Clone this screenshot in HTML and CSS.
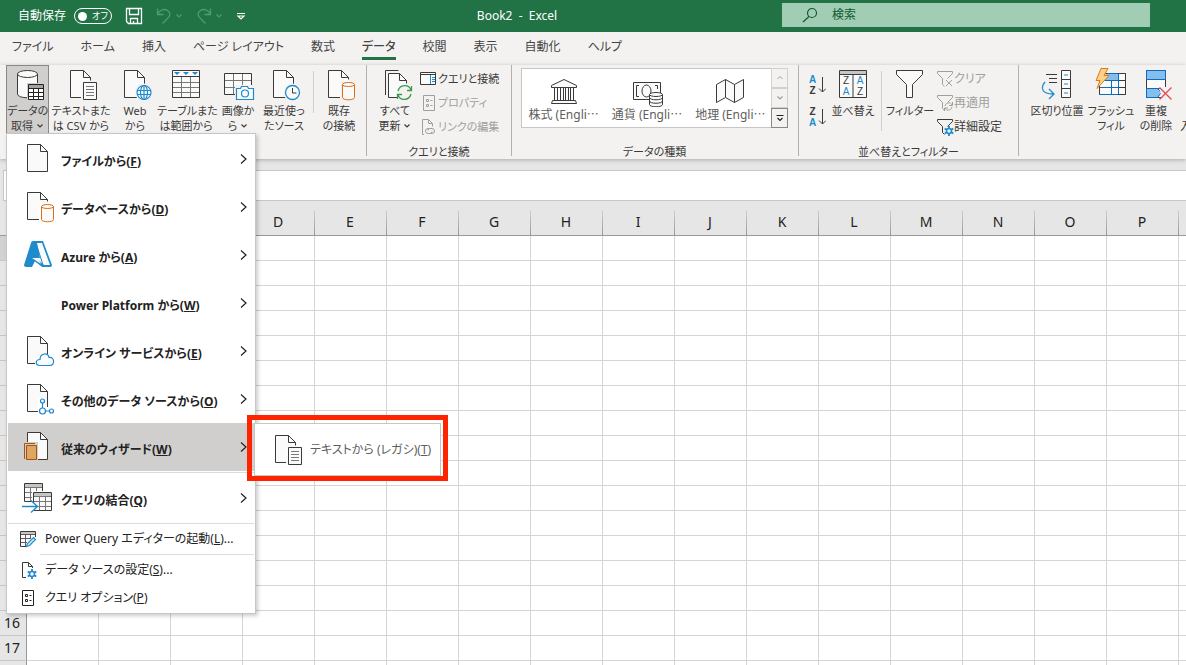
FILE: index.html
```html
<!DOCTYPE html>
<html lang="ja">

<head>
    <meta charset="UTF-8">
    <meta name="viewport" content="width=device-width, initial-scale=1.0">
    <title>Book2 - Excel</title>
    <link rel="stylesheet" href="styles.css">
</head>

<body>

    <!-- shared icon shapes -->
    <svg class="defs" width="0" height="0">
        <symbol id="doc" viewBox="0 0 32 32">
            <path d="M5.5 1.5h13l7 7v20h-20z" fill="#fafafa" stroke="#3b3a39" />
            <path d="M18.5 1.5v7h7" fill="none" stroke="#3b3a39" />
        </symbol>
        <symbol id="doc-text" viewBox="0 0 32 32">
            <path d="M5.5 1.5h12l7 7v4h-7v16h-12z" fill="#fafafa" />
            <path d="M16 28.5H5.5v-27h13l7 7v3M18.5 1.5v7h7" fill="none" stroke="#3b3a39" />
            <path d="M18.5 13.5h13v17h-13z" fill="#fafafa" stroke="#3b3a39" />
            <path d="M21 17.5h8M21 20.5h8M21 23.5h8M21 26.5h8" stroke="#797774" />
        </symbol>
        <symbol id="doc-db" viewBox="0 0 32 32">
            <path d="M5.5 1.5h13l7 7v4h-8v16h-12z" fill="#fafafa" />
            <path d="M17 28.5H5.5v-27h13l7 7v2M18.5 1.5v7h7" fill="none" stroke="#3b3a39" />
            <path d="M19.5 15.5v13c0 3 12 3 12 0v-13" fill="#fafafa" stroke="#dd6b10" />
            <ellipse cx="25.5" cy="15.5" rx="6" ry="2" fill="#fafafa" stroke="#dd6b10" />
        </symbol>
        <symbol id="down" viewBox="0 0 8 8">
            <path d="M1.5 2.5l2.5 2.5 2.5-2.5" fill="none" stroke="currentColor" stroke-width="1.2" />
        </symbol>
        <symbol id="right" viewBox="0 0 8 12">
            <path d="M1 1.5l5 4.5-5 4.5" fill="none" stroke="currentColor" stroke-width="1.2" />
        </symbol>
        <symbol id="funnel" viewBox="0 0 18 18">
            <path d="M1.5 1.5h15v2l-5 5M1.5 1.5v2l5 5v6l2 2" fill="none" stroke="currentColor" />
        </symbol>
        <symbol id="gear" viewBox="0 0 10 10">
            <circle cx="5" cy="5" r="2.5" fill="none" stroke="#1e8bcd" stroke-width="1.5" />
            <path d="M5 0v2.500M5 7.500v2.500M.7 2.500l2 1.200M7.300 6.300l2 1.200M.7 7.500l2-1.200M7.300 3.700l2-1.200" stroke="#1e8bcd" stroke-width="1.8" />
        </symbol>
        <symbol id="props" viewBox="0 0 18 18">
            <path d="M3.5 1.5h11v15h-11z" fill="none" stroke="currentColor" />
            <path d="M6.5 5.5h2v2h-2zM6.5 10.5h2v2h-2z" fill="none" stroke="currentColor" />
            <path d="M10.5 6.5h2M10.5 11.5h2" stroke="currentColor" />
        </symbol>
    </svg>

    <header class="titlebar">
        <div class="quick">
            <label class="autosave">自動保存
                <span class="switch"><input type="checkbox"><span>オフ</span></span>
            </label>
            <button aria-label="保存">
                <svg width="18" height="18" viewBox="0 0 18 18" fill="none" stroke="#fff" stroke-width="1.3">
                    <path d="M1.5 1.5h15v15h-13l-2-2zM4.5 1.5v6h9v-6M5.5 16.5v-5h7v5M8.5 16v-2" />
                </svg>
            </button>
            <button class="dim" aria-label="元に戻す">
                <svg width="16" height="18" viewBox="0 0 16 18" fill="none" stroke="currentColor" stroke-width="1.3">
                    <path d="M1.5 1.5v6h6M1.5 7.5c2-5 7-6 10-4 3 2 3 5 1 7l-6 6" />
                </svg>
                <svg width="8" height="8"><use href="#down" /></svg>
            </button>
            <button class="dim" aria-label="やり直し">
                <svg width="16" height="18" viewBox="0 0 16 18" fill="none" stroke="currentColor" stroke-width="1.3">
                    <path d="M14.5 1.5v6h-6M14.5 7.5c-2-5-7-6-10-4-3 2-3 5-1 7l6 6" />
                </svg>
                <svg width="8" height="8"><use href="#down" /></svg>
            </button>
            <button aria-label="カスタマイズ">
                <svg width="10" height="10" viewBox="0 0 10 10" fill="none" stroke="#fff" stroke-width="1.2">
                    <path d="M1 2.5h8M2 5l3 3 3-3z" />
                </svg>
            </button>
        </div>
        <h1>Book2 &nbsp;- &nbsp;Excel</h1>
        <label class="search">
            <svg width="16" height="16" viewBox="0 0 16 16" fill="none" stroke="#0e5c2f" stroke-width="1.2">
                <circle cx="10" cy="6" r="4.500" />
                <path d="M7 9.500l-6 5.500" />
            </svg>
            <input type="text" placeholder="検索" aria-label="検索">
        </label>
    </header>

    <nav class="tabs">
        <a href="#">ファイル</a>
        <a href="#">ホーム</a>
        <a href="#">挿入</a>
        <a href="#">ページ レイアウト</a>
        <a href="#">数式</a>
        <a href="#" class="active">データ</a>
        <a href="#">校閲</a>
        <a href="#">表示</a>
        <a href="#">自動化</a>
        <a href="#">ヘルプ</a>
    </nav>

    <div class="ribbon">
        <section class="group get-data">
            <div class="tools">
                <button class="tool pressed">
                    <svg class="icon" viewBox="0 0 32 32">
                        <path d="M5.5 5v20c0 5 20 5 20 0V5" fill="#fafafa" stroke="#3b3a39" />
                        <ellipse cx="15.5" cy="5" rx="10" ry="3.5" fill="#fafafa" stroke="#3b3a39" />
                        <path d="M15 14h17v18H15z" fill="#d0cfce" />
                        <path d="M16.5 15.5h15v15h-15z" fill="#fff" stroke="#222" />
                        <path d="M17 16h14v3H17z" fill="#a5a3a1" />
                        <path d="M16.5 19.5h15M16.5 23.5h15M16.5 27.5h15M21.5 19v12M26.5 19v12" stroke="#222" />
                    </svg>
                    データの<br>取得 <svg width="8" height="8"><use href="#down" /></svg>
                </button>
                <button class="tool">
                    <svg class="icon"><use href="#doc-text" /></svg>
                    テキストまた<br>は CSV から
                </button>
                <button class="tool">
                    <svg class="icon" viewBox="0 0 32 32">
                        <use href="#doc" />
                        <circle cx="25" cy="23.5" r="9" fill="#f3f2f1" />
                        <g fill="none" stroke="#1e8bcd" stroke-width="1.2">
                            <circle cx="25" cy="23.5" r="7" fill="#fafafa" />
                            <ellipse cx="25" cy="23.5" rx="3.5" ry="7" />
                            <path d="M18.5 21.5h13M18.5 25.5h13M25 16.5v14" />
                        </g>
                    </svg>
                    Web<br>から
                </button>
                <button class="tool">
                    <svg class="icon" viewBox="0 0 32 32">
                        <path d="M2.5 1.5h27v27h-27z" fill="#fafafa" stroke="#3b3a39" />
                        <path d="M3 13.5h26M3 18.5h26M3 23.5h26M11.5 7v21M20.5 7v21" stroke="#797774" />
                        <path d="M2.5 7.5h27" stroke="#3b3a39" />
                        <path d="M4 3h6l-3 3zM13 3h6l-3 3zM22 3h6l-3 3z" fill="#1e8bcd" />
                    </svg>
                    テーブルまた<br>は範囲から
                </button>
                <button class="tool">
                    <svg class="icon" viewBox="0 0 32 32">
                        <path d="M2.5 4.5h27v21h-27z" fill="#fafafa" stroke="#3b3a39" />
                        <path d="M3 11.5h26M3 18.5h26M11.5 5v20M20.5 5v20" stroke="#797774" />
                        <path d="M13 16h19v16H13z" fill="#f3f2f1" />
                        <path d="M14.5 19.5h4l1-2h6l1 2h5v11h-17z" fill="#fafafa" stroke="#1e8bcd" stroke-width="1.2" />
                        <circle cx="23" cy="24.5" r="3.5" fill="none" stroke="#1e8bcd" stroke-width="1.2" />
                    </svg>
                    画像か<br>ら <svg width="8" height="8"><use href="#down" /></svg>
                </button>
                <button class="tool">
                    <svg class="icon" viewBox="0 0 32 32">
                        <use href="#doc" />
                        <circle cx="24.5" cy="23.5" r="9" fill="#f3f2f1" />
                        <circle cx="24.5" cy="23.5" r="7" fill="#fafafa" stroke="#1e8bcd" stroke-width="1.3" />
                        <path d="M24.5 19v5h4" fill="none" stroke="#3b3a39" />
                    </svg>
                    最近使っ<br>たソース
                </button>
                <i class="divider short"></i>
                <button class="tool">
                    <svg class="icon"><use href="#doc-db" /></svg>
                    既存<br>の接続
                </button>
            </div>
        </section>

        <section class="group connections">
            <div class="tools">
                <button class="tool">
                    <svg class="icon" viewBox="0 0 32 32">
                        <path d="M6.5 26V1.5h13" fill="none" stroke="#3b3a39" />
                        <path d="M9.5 4.5h11l7 7v17h-18z" fill="#fafafa" />
                        <path d="M18 28.5H9.5v-24h11l7 7v3M20.5 4.5v7h7" fill="none" stroke="#3b3a39" />
                        <circle cx="26" cy="23.5" r="8.5" fill="#f3f2f1" />
                        <path d="M19 22c2-7 11-7 13-1M32.5 17v4.5H28M32 25c-2 7-11 7-13 1M18.5 30v-4.5H23" fill="none" stroke="#3a9b4e" stroke-width="1.3" />
                    </svg>
                    すべて<br>更新 <svg width="8" height="8"><use href="#down" /></svg>
                </button>
                <div class="stack">
                    <button class="line">
                        <svg viewBox="0 0 18 18">
                            <path d="M.5 2.5h15v12H.5z" fill="#fafafa" stroke="#3b3a39" />
                            <path d="M1 4.5h14" stroke="#3b3a39" />
                            <path d="M10.5 5v9M12 7.5h3M12 9.5h3M12 11.5h3" stroke="#1e8bcd" />
                        </svg>
                        クエリと接続
                    </button>
                    <button class="line" disabled>
                        <svg><use href="#props" /></svg>
                        プロパティ
                    </button>
                    <button class="line" disabled>
                        <svg viewBox="0 0 18 18" fill="none" stroke="currentColor">
                            <path d="M4 16.5H2.5v-15h6l4 4v3M8.5 1.5v4h4" />
                            <path d="M9 10.5h-1a2 2 0 0 0 0 5h2a2 2 0 0 0 2-2M11 15.5h1a2 2 0 0 0 0-5h-2a2 2 0 0 0-2 2" />
                        </svg>
                        リンクの編集
                    </button>
                </div>
            </div>
            <h2>クエリと接続</h2>
        </section>

        <section class="group types">
            <div class="gallery">
                <button>
                    <svg viewBox="0 0 32 28" fill="#fafafa" stroke="#3b3a39">
                        <path d="M3.5 8.5v-2l12.5-6 12.5 6v2z" />
                        <path d="M6.5 8.5h3v13h-3zM12.5 8.5h3v13h-3zM17.5 8.5h3v13h-3zM22.5 8.5h3v13h-3z" />
                        <path d="M4.5 21.5h23l1 3h-25z" />
                    </svg>
                    株式 (Engli⋯
                </button>
                <button>
                    <svg viewBox="0 0 32 28" fill="#fafafa" stroke="#3b3a39">
                        <path d="M2.5 3.5h27v17h-27z" />
                        <path d="M8 6.5H5.5v11H8M24 6.5h2.5V10" fill="none" />
                        <ellipse cx="15.5" cy="12" rx="4.5" ry="6" />
                        <path d="M18.5 15.5v10c0 3 13 3 13 0v-10" />
                        <ellipse cx="25" cy="15.5" rx="6.5" ry="2" />
                        <path d="M18.5 18.500c0 3 13 3 13 0M18.5 22c0 3 13 3 13 0" fill="none" />
                    </svg>
                    通貨 (Engli⋯
                </button>
                <button>
                    <svg viewBox="0 0 32 28" fill="#fafafa" stroke="#3b3a39">
                        <path d="M2.5 5.5l9-5 9 5 9-5v18l-9 5-9-5-9 5z" />
                        <path d="M11.5 .5v18M20.5 5.5v18" />
                    </svg>
                    地理 (Engli⋯
                </button>
                <div class="scroller">
                    <button disabled aria-label="上へ"><svg width="8" height="8" viewBox="0 0 8 8"><path d="M1.5 5l2.5-2.5 2.5 2.5" fill="none" stroke="currentColor" /></svg></button>
                    <button disabled aria-label="下へ"><svg width="8" height="8"><use href="#down" /></svg></button>
                    <button aria-label="その他"><svg width="8" height="8" viewBox="0 0 8 8"><path d="M.5 1.5h7M1.5 4l2.5 2.5 2.5-2.5" fill="none" stroke="#222" stroke-width="1.2" /></svg></button>
                </div>
            </div>
            <h2>データの種類</h2>
        </section>

        <section class="group sort">
            <div class="tools">
                <div class="order">
                    <button aria-label="昇順">
                        <span><b>A</b>Z</span>
                        <svg width="8" height="18" viewBox="0 0 8 18" fill="none" stroke="#3b3a39"><path d="M4.5 1v15M1 12.5l3.5 3.5 3.5-3.5" /></svg>
                    </button>
                    <button aria-label="降順">
                        <span>Z<b>A</b></span>
                        <svg width="8" height="18" viewBox="0 0 8 18" fill="none" stroke="#3b3a39"><path d="M4.5 1v15M1 12.5l3.5 3.5 3.5-3.5" /></svg>
                    </button>
                </div>
                <button class="tool">
                    <svg class="icon letters" viewBox="0 0 32 32">
                        <path d="M2.5 1.5h27v27h-27z" fill="#fafafa" stroke="#3b3a39" />
                        <path d="M3 2h26v3H3z" fill="#c8c6c4" />
                        <path d="M2.5 5.5h27M16 6v22" stroke="#3b3a39" />
                        <text x="9" y="15">Z</text>
                        <text x="9" y="26" class="blue">A</text>
                        <text x="23" y="15" class="blue">A</text>
                        <text x="23" y="26">Z</text>
                    </svg>
                    並べ替え
                </button>
                <i class="divider"></i>
                <button class="tool">
                    <svg class="icon" viewBox="0 0 32 32">
                        <path d="M2.5 1.5h26v4l-10 10v13h-6v-13l-10-10z" fill="#fafafa" stroke="#3b3a39" />
                    </svg>
                    フィルター
                </button>
                <div class="stack">
                    <button class="line" disabled>
                        <svg viewBox="0 0 18 18">
                            <use href="#funnel" />
                            <path d="M10 10l6 6M16 10l-6 6" stroke="currentColor" />
                        </svg>
                        クリア
                    </button>
                    <button class="line" disabled>
                        <svg viewBox="0 0 18 18">
                            <use href="#funnel" />
                            <path d="M9 12c1-4 6-4 7-1M16.5 8v3.5H13M16 13c-1 4-6 4-7 1M8.5 17v-3H12" fill="none" stroke="currentColor" />
                        </svg>
                        再適用
                    </button>
                    <button class="line">
                        <svg viewBox="0 0 18 18">
                            <use href="#funnel" />
                            <use href="#gear" x="8" y="8" width="10" height="10" />
                        </svg>
                        詳細設定
                    </button>
                </div>
            </div>
            <h2>並べ替えとフィルター</h2>
        </section>

        <section class="group data-tools">
            <div class="tools">
                <button class="tool">
                    <svg class="icon" viewBox="0 0 32 32">
                        <path d="M5 5.5h11M8 9.5h8M8 13.5h8" stroke="#3b3a39" />
                        <path d="M20.5 1.5h9v27h-9zM20.5 10.5h9M20.5 19.5h9" fill="#fafafa" stroke="#3b3a39" />
                        <path d="M23 6h4M23 15h4M23 24h4" stroke="#1e8bcd" />
                        <path d="M4 13c-5 6-3 12 8 12M8 20l5 5-5 5" fill="none" stroke="#1e8bcd" stroke-width="1.3" />
                    </svg>
                    区切り位置
                </button>
                <button class="tool">
                    <svg class="icon" viewBox="0 0 32 32">
                        <path d="M4.5 4.5h26v21h-26z" fill="#fafafa" stroke="#3b3a39" />
                        <path d="M11 5h13v6H9z" fill="#83beec" />
                        <path d="M5 25.5h18.5v-21H12M5 18.5h25M8 11.5h22M16.5 11v14" fill="none" stroke="#0f6cbd" />
                        <path d="M23.5 25.5h7v-21h-7M24 11.5h6M24 18.5h6" fill="none" stroke="#3b3a39" />
                        <path d="M6-.5h7l-4 7h5L2 19.5l3-8H1z" fill="#f9d28b" stroke="#e3790d" />
                    </svg>
                    フラッシュ<br>フィル
                </button>
                <button class="tool">
                    <svg class="icon" viewBox="0 0 32 32">
                        <path d="M6.5 1.5h19v27h-19z" fill="#fafafa" stroke="#3b3a39" />
                        <path d="M6.5 1.5h19v9h-19zM6.5 19.5h11l4 4-4 5h-11z" fill="#83beec" stroke="#0f6cbd" />
                        <path d="M19 18h13v12H22z" fill="#f3f2f1" />
                        <path d="M6.5 19.5h14" stroke="#0f6cbd" />
                        <path d="M19.5 18.5l12 12M31.5 18.5l-12 12" stroke="#e8484f" stroke-width="1.3" />
                    </svg>
                    重複<br>の削除
                </button>
                <button class="tool">
                    <svg class="icon"></svg>
                    <br>入力規則
                </button>
            </div>
        </section>
    </div>

    <div class="formula-bar">
        <input type="text" aria-label="数式バー">
    </div>

    <main class="sheet">
        <table>
            <thead>
                <tr>
                    <th class="corner"></th>
                    <th></th><th></th><th></th><th>D</th><th>E</th><th>F</th><th>G</th><th>H</th><th>I</th>
                    <th>J</th><th>K</th><th>L</th><th>M</th><th>N</th><th>O</th><th>P</th><th></th>
                </tr>
            </thead>
            <tbody id="rows"></tbody>
        </table>
    </main>

    <div class="menu">
        <button class="item">
            <svg class="icon"><use href="#doc" /></svg>
            <span>ファイルから(<u>F</u>)</span>
            <svg class="arrow"><use href="#right" /></svg>
        </button>
        <button class="item">
            <svg class="icon"><use href="#doc-db" /></svg>
            <span>データベースから(<u>D</u>)</span>
            <svg class="arrow"><use href="#right" /></svg>
        </button>
        <button class="item">
            <svg class="icon" viewBox="0 0 32 32">
                <path d="M11 2h10l9 24c0 1-1 2-2 2h-8l-7-6-3 6H4c-1 0-2-1-2-2L9 4c0-1 1-2 2-2z" fill="#1e8bcd" />
                <path d="M15 4h5l8 22h-6L13 19h5z" fill="#fafafa" />
                <path d="M15 3l-4 16h4l6 7h-3l-7-5-2 6" fill="#1e8bcd" />
                <path d="M14 4l7 22" fill="none" stroke="#1e8bcd" />
                <path d="M10 19h6l3 6z" fill="#fafafa" />
            </svg>
            <span>Azure から(<u>A</u>)</span>
            <svg class="arrow"><use href="#right" /></svg>
        </button>
        <button class="item">
            <svg class="icon"></svg>
            <span>Power Platform から(<u>W</u>)</span>
            <svg class="arrow"><use href="#right" /></svg>
        </button>
        <button class="item">
            <svg class="icon" viewBox="0 0 32 32">
                <use href="#doc" />
                <path d="M13 32V24l6-5h13v13z" fill="#fff" />
                <path d="M18 30.5c-5 0-5-6 0-6 0-7 9-7 9-2 6-1 6 8 1 8z" fill="#fafafa" stroke="#1e8bcd" stroke-width="1.2" />
            </svg>
            <span>オンライン サービスから(<u>E</u>)</span>
            <svg class="arrow"><use href="#right" /></svg>
        </button>
        <button class="item">
            <svg class="icon" viewBox="0 0 32 32">
                <use href="#doc" />
                <path d="M16 32V15h8v9h8v8z" fill="#fff" />
                <g fill="#fafafa" stroke="#1e8bcd" stroke-width="1.2">
                    <path d="M20.5 20v5M23 28h5" />
                    <circle cx="20.5" cy="18" r="2" />
                    <circle cx="20.5" cy="28" r="3" />
                    <circle cx="29.5" cy="28" r="2" />
                </g>
            </svg>
            <span>その他のデータ ソースから(<u>O</u>)</span>
            <svg class="arrow"><use href="#right" /></svg>
        </button>
        <button class="item selected">
            <svg class="icon" viewBox="0 0 32 32">
                <use href="#doc" />
                <path d="M1 11h15v19H1z" fill="#d0cfce" />
                <path d="M2.5 28V12.5H13" fill="none" stroke="#a8500f" />
                <path d="M4.5 14.5h10v14h-10z" fill="#dda762" stroke="#a8500f" />
            </svg>
            <span>従来のウィザード(<u>W</u>)</span>
            <svg class="arrow"><use href="#right" /></svg>
        </button>
        <hr class="indent">
        <button class="item">
            <svg class="icon" viewBox="0 0 32 32">
                <path d="M2.5 1.5h18v18h-18z" fill="#fafafa" stroke="#3b3a39" />
                <path d="M3 2h17v3H3z" fill="#c8c6c4" />
                <path d="M3 5.5h17M3 10.5h17M3 15.5h17M8.5 5v14M14.5 5v14" stroke="#797774" />
                <path d="M10 9h22v21H17L10 23z" fill="#fff" />
                <path d="M11.5 10.5h18v18h-18z" fill="#fafafa" stroke="#3b3a39" />
                <path d="M12 11h17v3H12z" fill="#c8c6c4" />
                <path d="M12 14.5h17M12 19.5h17M12 24.5h17M17.5 14v14M23.5 14v14" stroke="#797774" />
                <path d="M1 20h9l6 4-6 6-9-3z" fill="#fff" />
                <path d="M0 24.5h15M9 18.5l6.500 6-6.500 6" fill="none" stroke="#1e8bcd" stroke-width="1.3" />
            </svg>
            <span>クエリの結合(<u>Q</u>)</span>
            <svg class="arrow"><use href="#right" /></svg>
        </button>
        <hr>
        <button class="small">
            <svg viewBox="0 0 18 18">
                <path d="M7 16.500H1.500v-15h15V7" fill="#fafafa" stroke="#3b3a39" />
                <path d="M2 2h14v2H2z" fill="#c8c6c4" />
                <path d="M2 4.500h14M2 8.500h10M2 12.500h6M6.500 4v12M11.500 4v5" stroke="#605e5c" />
                <path d="M7.500 16.500l1-3 6-6 2 2-6 6z" fill="#d3e9f8" stroke="#1e8bcd" stroke-width="1.2" />
            </svg>
            <span>Power Query エディターの起動(<u>L</u>)...</span>
        </button>
        <hr class="indent">
        <button class="small">
            <svg viewBox="0 0 18 18">
                <path d="M7 16.500H3.500v-15h6l4 4V7M9.500 1.500v4h4" fill="none" stroke="#3b3a39" />
                <use href="#gear" x="8" y="8" width="10" height="10" />
            </svg>
            <span>データ ソースの設定(<u>S</u>)...</span>
        </button>
        <button class="small">
            <svg><use href="#props" /></svg>
            <span>クエリ オプション(<u>P</u>)</span>
        </button>
    </div>

    <div class="highlight">
        <button class="submenu">
            <svg class="icon"><use href="#doc-text" /></svg>
            <span>テキストから (レガシ)(<u>T</u>)</span>
        </button>
    </div>

    <script>
        const rows = document.getElementById('rows');

        // the menu hides the first row numbers
        for (let i = 1; i <= 40; i++) {
            const label = i === 16 || i === 17 ? i : '';
            rows.innerHTML += `<tr><th>${label}</th>${'<td></td>'.repeat(17)}</tr>`;
        }
    </script>
</body>

</html>
```
FILE: styles.css
```css
* {
    margin: 0;
    padding: 0;
    box-sizing: border-box;
}

body {
    position: relative;
    height: 100vh;
    overflow: hidden;
    display: flex;
    flex-direction: column;
    background-color: #e6e6e6;
    color: #3b3a39;
    font-family: "Noto Sans", "Noto Sans CJK JP", sans-serif;
    font-size: 12px;
    line-height: 16px;
    font-feature-settings: "palt";
}

button,
input {
    border: none;
    background: none;
    color: inherit;
    font: inherit;
    font-feature-settings: inherit;
}

button {
    white-space: nowrap;
}

.defs {
    position: absolute;
}

.icon {
    display: block;
    width: 32px;
    height: 32px;
    flex-shrink: 0;
    overflow: visible;
}

/* title bar */
.titlebar {
    display: grid;
    grid-template-columns: 252px 1fr 368px 36px;
    align-items: center;
    flex-shrink: 0;
    height: 32px;
    background-color: #217346;
    color: white;
}

.titlebar h1 {
    font-size: 12px;
    font-weight: normal;
    text-align: center;
}

.quick {
    display: flex;
    align-items: center;
    padding-left: 18px;
    gap: 13px;
}

.quick button {
    display: flex;
    align-items: center;
    gap: 3px;
}

.quick .dim {
    color: #4f9a70;
}

.autosave {
    display: flex;
    align-items: center;
    gap: 8px;
    white-space: nowrap;
}

.switch {
    display: flex;
    align-items: center;
    gap: 5px;
    width: 38px;
    height: 16px;
    padding: 0 3px;
    border: 1px solid white;
    border-radius: 8px;
    font-size: 9px;
}

.switch input {
    appearance: none;
    flex-shrink: 0;
    width: 9px;
    height: 9px;
    border-radius: 50%;
    background-color: white;
}

.search {
    display: flex;
    align-items: center;
    gap: 14px;
    height: 24px;
    margin-bottom: 2px;
    padding-left: 20px;
    background-color: #a0cdb4;
    color: #0e5c2f;
}

.search input {
    flex: 1;
}

.search input::placeholder {
    color: #0e5c2f;
}

/* tabs */
.tabs {
    display: flex;
    gap: 27px;
    flex-shrink: 0;
    height: 33px;
    padding: 5px 12px 0;
    background-color: #f3f2f1;
    line-height: 20px;
    white-space: nowrap;
}

.tabs a {
    height: 23px;
    color: #444;
    text-decoration: none;
}

.tabs .active {
    border-bottom: 3px solid #217346;
    font-weight: 500;
}

/* ribbon */
.ribbon {
    display: flex;
    flex-shrink: 0;
    height: 94px;
    padding-bottom: 3px;
    background-color: #f3f2f1;
    box-shadow: 0 1px 4px #aaa;
    font-size: 11px;
}

.group {
    display: flex;
    flex-direction: column;
    justify-content: space-between;
    flex-shrink: 0;
    border-right: 1px solid #b3b0ad;
}

.group h2 {
    margin-bottom: -3px;
    font-size: 11px;
    font-weight: normal;
    line-height: 14px;
    text-align: center;
}

.tools {
    display: flex;
    align-items: start;
}

.tool {
    padding-top: 4px;
    line-height: 15px;
    text-align: center;
}

.tool .icon {
    margin: 0 auto 2px;
}

.pressed {
    height: 69px;
    padding-top: 3px;
    border: 1px solid #8a8886;
    background-color: #d0cfce;
}

.divider {
    justify-self: center;
    width: 1px;
    height: 60px;
    margin-top: 6px;
    background-color: #d2d0ce;
}

.divider.short {
    height: 42px;
}

.get-data {
    width: 367px;
    padding-left: 6px;
}

.get-data .tools {
    display: grid;
    grid-template-columns: 43px 64px 44px 58px 46px 46px 12px 40px;
}

.connections {
    width: 145px;
}

.connections .tool {
    width: 53px;
    padding-left: 3px;
}

.stack {
    display: flex;
    flex-direction: column;
    padding-top: 2px;
}

.line {
    display: flex;
    align-items: center;
    height: 24px;
}

.line svg {
    width: 18px;
    height: 18px;
}

.line:disabled {
    color: #a19f9d;
}

.types {
    width: 287px;
    padding: 3px 10px 0 9px;
}

.gallery {
    display: grid;
    grid-template-columns: 1fr 1fr 1fr 15px;
    height: 60px;
    border: 1px solid #c8c6c4;
    background-color: white;
    font-size: 12px;
}

.gallery > button {
    color: #605e5c;
    padding-top: 4px;
}

.gallery > button svg {
    display: block;
    width: 32px;
    height: 28px;
    margin: 2px auto 0;
}

.scroller {
    display: grid;
    grid-template-rows: 1fr 1fr 1fr;
    margin: -1px;
}

.scroller button {
    display: flex;
    align-items: center;
    justify-content: center;
    border: 1px solid #8a8886;
    background-color: #f3f2f1;
}

.scroller button:disabled {
    border-color: #d2d0ce;
    color: #a19f9d;
}

.sort {
    width: 220px;
}

.sort .tools {
    display: grid;
    grid-template-columns: 30px 48px 8px 50px 1fr;
}

.sort .line {
    font-size: 12px;
}

.order {
    display: flex;
    flex-direction: column;
    gap: 10px;
    padding: 9px 0 0 10px;
}

.order button {
    display: flex;
    align-items: center;
    gap: 2px;
    height: 22px;
    font-family: "Liberation Sans", sans-serif;
    font-size: 10px;
    font-weight: bold;
    line-height: 11px;
}

.order button span {
    display: flex;
    flex-direction: column;
}

.order b {
    color: #1e8bcd;
}

.letters text {
    fill: #3b3a39;
    font-family: "Liberation Sans", sans-serif;
    font-size: 10px;
    text-anchor: middle;
}

.letters .blue {
    fill: #1e8bcd;
}

.sort .stack {
    padding-left: 1px;
}

.data-tools {
    border: none;
}

.data-tools .tools {
    display: grid;
    grid-template-columns: 60px 48px 42px 50px;
    padding-left: 8px;
}

/* formula bar */
.formula-bar {
    display: flex;
    flex-shrink: 0;
    height: 42px;
    padding: 11px 0 0 3px;
}

.formula-bar input {
    flex: 1;
    border: 1px solid #c6c6c6;
    border-right: none;
    background-color: white;
}

/* cells */
.sheet {
    flex: 1;
    overflow: hidden;
}

table {
    table-layout: fixed;
    width: 1251px;
    border-collapse: separate;
    border-spacing: 0;
    font-size: 14px;
    color: #222;
}

th {
    width: 72px;
    padding-right: 2px;
    font-weight: normal;
}

thead th {
    height: 35px;
    padding-top: 8px;
    border-bottom: 1px solid #999;
    background: linear-gradient(#d0d0d0, #999) right bottom / 1px 25px no-repeat #e6e6e6;
}

tbody th,
.corner {
    width: 27px;
}

tbody th {
    border-right: 1px solid #999;
    border-bottom: 1px solid #c6c6c6;
    background-color: #e6e6e6;
}

tbody tr:first-child th {
    background-color: #d2d2d2;
}

td {
    height: 25px;
    border-right: 1px solid #d4d4d4;
    border-bottom: 1px solid #d4d4d4;
    background-color: white;
}

/* drop-down menu */
.menu {
    position: absolute;
    top: 133px;
    left: 6px;
    width: 250px;
    padding: 1px;
    border: 1px solid #c6c6c6;
    background-color: white;
    color: #222;
    box-shadow: 2px 2px 4px #0003;
}

.item,
.small {
    display: flex;
    align-items: center;
    width: 100%;
    text-align: left;
}

.item {
    height: 48px;
    padding: 0 6px 0 14px;
    gap: 7px;
    font-weight: bold;
}

.item span {
    flex: 1;
    padding-top: 6px;
}

.arrow {
    width: 8px;
    height: 12px;
}

.selected {
    background-color: #d0cfce;
}

.menu hr {
    margin: 1px 0;
    border: none;
    border-top: 1px solid #dcdcdc;
}

.menu .indent {
    margin-left: 32px;
}

.small {
    height: 28px;
    padding-left: 11px;
    gap: 8px;
}

.small svg {
    width: 18px;
    height: 18px;
}

/* marked submenu */
.highlight {
    position: absolute;
    top: 415px;
    left: 247px;
    width: 201px;
    padding: 3px 2px 0;
    border: 5px solid #fe2400;
}

.submenu {
    display: flex;
    align-items: center;
    gap: 8px;
    width: 100%;
    height: 53px;
    padding-left: 15px;
    border: 1px solid #c6c6c6;
    background-color: white;
    color: #605e5c;
}
```
